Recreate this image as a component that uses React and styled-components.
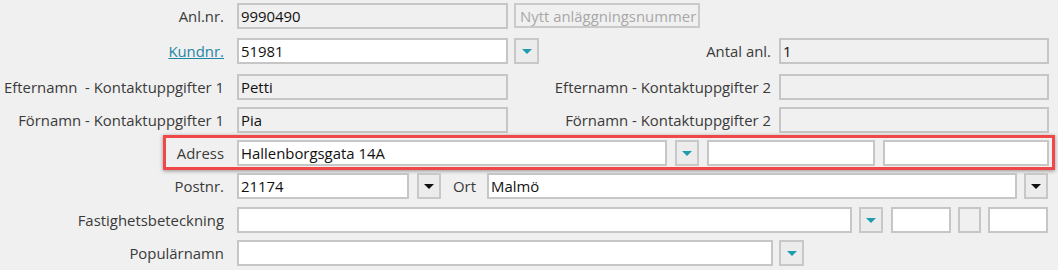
import React from "react";
import styled, { createGlobalStyle } from "styled-components";

const Global = createGlobalStyle`
  html, body { margin: 0; padding: 0; background: #f0f0f0; }
  * { box-sizing: border-box; }
`;

const Page = styled.div`
  width: 1058px;
  height: 270px;
  padding-top: 3px;
  background: #f0f0f0;
  display: flex;
  flex-direction: column;
  font-family: "Open Sans", "Noto Sans", sans-serif;
  font-size: 14.9px;
  color: #3a3a3a;
  overflow: hidden;
`;

const Row = styled.div`
  position: relative;
  display: flex;
  align-items: center;
  height: 26px;
  margin-top: ${(p) => p.$mt || 0}px;
  flex-shrink: 0;
`;

const HighlightRow = styled(Row)`
  &::before {
    content: "";
    position: absolute;
    left: 163px;
    right: 3px;
    top: -5px;
    bottom: -4px;
    border: 3px solid #f04848;
    box-shadow: 0 1px 4px rgba(0, 0, 0, 0.4);
    pointer-events: none;
  }
`;

const Label = styled.span`
  flex-shrink: 0;
  width: ${(p) => p.$w}px;
  margin-left: ${(p) => p.$ml || 0}px;
  margin-right: ${(p) => p.$mr ?? 13}px;
  text-align: ${(p) => p.$align || "right"};
  white-space: nowrap;
  line-height: 26px;
`;

const LinkLabel = styled.a`
  color: #1f86a6;
  text-decoration: underline;
  cursor: pointer;
`;

const Field = styled.div`
  flex-shrink: 0;
  width: ${(p) => p.$w}px;
  height: 26px;
  margin-left: ${(p) => p.$ml || 0}px;
  border: 2px solid #c6c6c6;
  background: ${(p) => (p.$disabled ? "#f0f0f0" : "#ffffff")};
  color: #111;
  padding: 0 2px;
  display: flex;
  align-items: center;
  white-space: nowrap;
  overflow: hidden;
`;

const ActionButton = styled.button`
  flex-shrink: 0;
  width: ${(p) => p.$w}px;
  height: 25px;
  margin-left: ${(p) => p.$ml || 0}px;
  border: 2px solid #cacaca;
  background: #f0f0f0;
  color: #a8a8a8;
  font-family: inherit;
  font-size: 14.9px;
  padding: 0 4px;
  text-align: left;
  white-space: nowrap;
  align-self: flex-start;
`;

const DropButton = styled.button`
  flex-shrink: 0;
  width: ${(p) => p.$w || 24}px;
  height: 26px;
  margin-left: ${(p) => p.$ml || 0}px;
  border: 2px solid #c8c8c8;
  background: #ececec;
  padding: 0;
  display: flex;
  align-items: center;
  justify-content: center;
`;

const Arrow = ({ color }) => (
  <svg width="10" height="5" viewBox="0 0 10 5">
    <path d="M0 0 H10 L5 5 Z" fill={color} />
  </svg>
);

const TEAL = "#1e9bac";
const BLACK = "#111";

export default function App() {
  return (
    <>
      <Global />
      <Page>
        <Row>
          <Label $w={224}>Anl.nr.</Label>
          <Field $w={271} $disabled>9990490</Field>
          <ActionButton $w={186} $ml={6}>Nytt anläggningsnummer</ActionButton>
        </Row>
        <Row $mt={9}>
          <Label $w={224}>
            <LinkLabel>Kundnr.</LinkLabel>
          </Label>
          <Field $w={271}>51981</Field>
          <DropButton $w={25} $ml={6}>
            <Arrow color={TEAL} />
          </DropButton>
          <Label $w={232} $mr={8}>Antal anl.</Label>
          <Field $w={270} $disabled>1</Field>
        </Row>
        <Row $mt={10}>
          <Label $w={224}>Efternamn&nbsp; - Kontaktuppgifter 1</Label>
          <Field $w={271} $disabled>Petti</Field>
          <Label $w={263} $mr={8}>Efternamn - Kontaktuppgifter 2</Label>
          <Field $w={270} $disabled />
        </Row>
        <Row $mt={7}>
          <Label $w={224}>Förnamn - Kontaktuppgifter 1</Label>
          <Field $w={271} $disabled>Pia</Field>
          <Label $w={263} $mr={8}>Förnamn - Kontaktuppgifter 2</Label>
          <Field $w={270} $disabled />
        </Row>
        <HighlightRow $mt={7}>
          <Label $w={224}>Adress</Label>
          <Field $w={430}>Hallenborgsgata 14A</Field>
          <DropButton $w={24} $ml={8}>
            <Arrow color={TEAL} />
          </DropButton>
          <Field $w={168} $ml={8} />
          <Field $w={166} $ml={8} />
        </HighlightRow>
        <Row $mt={7}>
          <Label $w={224}>Postnr.</Label>
          <Field $w={172}>21174</Field>
          <DropButton $w={24} $ml={8}>
            <Arrow color={BLACK} />
          </DropButton>
          <Label $w={34} $ml={12} $mr={0} $align="left">Ort</Label>
          <Field $w={530}>Malmö</Field>
          <DropButton $w={24} $ml={7}>
            <Arrow color={BLACK} />
          </DropButton>
        </Row>
        <Row $mt={8}>
          <Label $w={224}>Fastighetsbeteckning</Label>
          <Field $w={615} />
          <DropButton $w={24} $ml={7}>
            <Arrow color={TEAL} />
          </DropButton>
          <Field $w={60} $ml={8} />
          <Field $w={23} $ml={7} $disabled />
          <Field $w={60} $ml={7} />
        </Row>
        <Row $mt={7}>
          <Label $w={224}>Populärnamn</Label>
          <Field $w={536} />
          <DropButton $w={25} $ml={6}>
            <Arrow color={TEAL} />
          </DropButton>
        </Row>
      </Page>
    </>
  );
}
